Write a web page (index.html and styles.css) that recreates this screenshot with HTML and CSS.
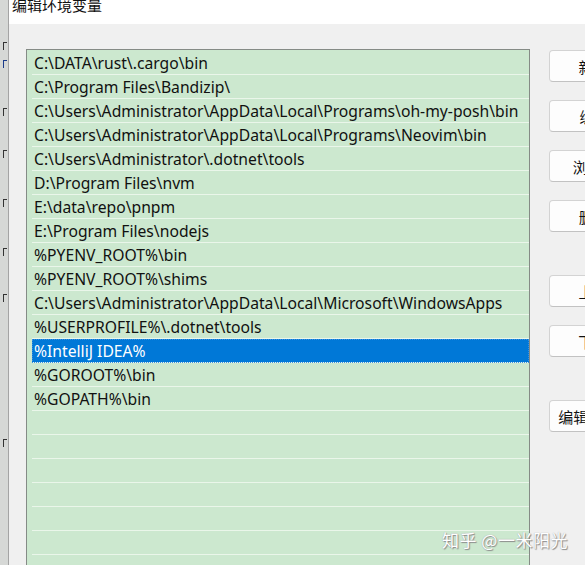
FILE: index.html
```html
<!DOCTYPE html>
<html lang="zh-CN">
<head>
<meta charset="utf-8">
<title>编辑环境变量</title>
<link rel="stylesheet" href="styles.css">
</head>
<body>
<div class="bgwin">
  <span class="mark m1"></span>
  <span class="mark m2"></span>
  <span class="mark m3"></span>
  <span class="mark m4"></span>
  <span class="mark m5"></span>
  <span class="mark m6"></span>
  <span class="mark m7"></span>
  <span class="mark m8"></span>
</div>
<div class="dialog">
  <div class="titlebar"><span class="title">编辑环境变量</span></div>
  <div class="content">
    <div class="list">
      <div class="row">C:\DATA\rust\.cargo\bin</div>
      <div class="row">C:\Program Files\Bandizip\</div>
      <div class="row">C:\Users\Administrator\AppData\Local\Programs\oh-my-posh\bin</div>
      <div class="row">C:\Users\Administrator\AppData\Local\Programs\Neovim\bin</div>
      <div class="row">C:\Users\Administrator\.dotnet\tools</div>
      <div class="row">D:\Program Files\nvm</div>
      <div class="row">E:\data\repo\pnpm</div>
      <div class="row">E:\Program Files\nodejs</div>
      <div class="row">%PYENV_ROOT%\bin</div>
      <div class="row">%PYENV_ROOT%\shims</div>
      <div class="row">C:\Users\Administrator\AppData\Local\Microsoft\WindowsApps</div>
      <div class="row">%USERPROFILE%\.dotnet\tools</div>
      <div class="row selected">%IntelliJ IDEA%</div>
      <div class="row">%GOROOT%\bin</div>
      <div class="row">%GOPATH%\bin</div>
      <div class="row"></div>
      <div class="row"></div>
      <div class="row"></div>
      <div class="row"></div>
      <div class="row"></div>
      <div class="row"></div>
      <div class="row"></div>
    </div>
    <div class="buttons">
      <button class="btn">新建(N)</button>
      <button class="btn">编辑(E)</button>
      <button class="btn">浏览(B)...</button>
      <button class="btn">删除(D)</button>
      <button class="btn group">上移(U)</button>
      <button class="btn">下移(O)</button>
      <button class="btn group">编辑文本(T)...</button>
    </div>
  </div>
</div>
<div class="watermark">知乎 @一米阳光</div>
</body>
</html>
```
FILE: styles.css
```css
html, body {
  margin: 0;
  padding: 0;
}
body {
  width: 585px;
  height: 565px;
  overflow: hidden;
  display: flex;
  position: relative;
  font-family: "Noto Sans", "Noto Sans CJK SC", sans-serif;
  color: #000;
}
.bgwin {
  width: 8px;
  flex: none;
  background: #d6d8d6;
  border-right: 1px solid #a4a4a4;
  position: relative;
  overflow: hidden;
}
.mark {
  position: absolute;
  right: 1px;
  width: 3px;
  height: 7px;
  border-left: 1px solid #333;
  border-top: 1px solid #333;
}
.m1 { top: 42px; }
.m2 { top: 60px; border-color: #1a3a8a; }
.m3 { top: 108px; }
.m4 { top: 150px; }
.m5 { top: 199px; }
.m6 { top: 248px; }
.m7 { top: 294px; }
.m8 { top: 439px; }
.dialog {
  flex: 1;
  background: #f0f0f0;
  display: flex;
  flex-direction: column;
  min-width: 0;
}
.titlebar {
  height: 24px;
  background: #ffffff;
  padding-left: 3px;
  overflow: hidden;
  flex: none;
}
.title {
  display: block;
  font-family: "Noto Sans CJK SC", sans-serif;
  font-size: 15px;
  line-height: 15px;
  margin-top: -3px;
  color: #111;
}
.content {
  display: flex;
  padding-top: 25px;
  padding-left: 17px;
  align-items: flex-start;
}
.list {
  width: 497px;
  height: 560px;
  flex: none;
  background: #cce8cf;
  border: 1px solid #858b86;
  border-bottom: none;
  padding-left: 5px;
  padding-top: 1px;
  overflow: hidden;
}
.row {
  height: 22px;
  padding-top: 1px;
  border-bottom: 1px solid #eaf6ea;
  font-size: 15.7px;
  line-height: 23px;
  padding-left: 2px;
  white-space: nowrap;
  color: #111;
}
.row.selected {
  background: #0078d7;
  color: #fff;
  outline: 1px dotted #3a8fe0;
  outline-offset: -1px;
}
.buttons {
  display: flex;
  flex-direction: column;
  gap: 18px;
  margin-left: 19px;
  padding-top: 1px;
}
.btn {
  width: 110px;
  height: 32px;
  flex: none;
  background: #fdfdfd;
  border: 1px solid #d3d3d3;
  border-bottom-color: #c2c2c2;
  border-radius: 4px;
  font-family: "Noto Sans CJK SC", sans-serif;
  font-size: 15px;
  color: #111;
  text-align: center;
  padding: 0;
  white-space: nowrap;
}
.btn.group {
  margin-top: 25px;
}
.watermark {
  position: absolute;
  left: 442px;
  top: 527px;
  font-family: "Noto Sans CJK SC", sans-serif;
  font-size: 17px;
  color: #ffffff;
  text-shadow: 1px 1px 1px #8a8a8a, 0 0 1px #999;
  letter-spacing: 0.5px;
  white-space: nowrap;
}
```
